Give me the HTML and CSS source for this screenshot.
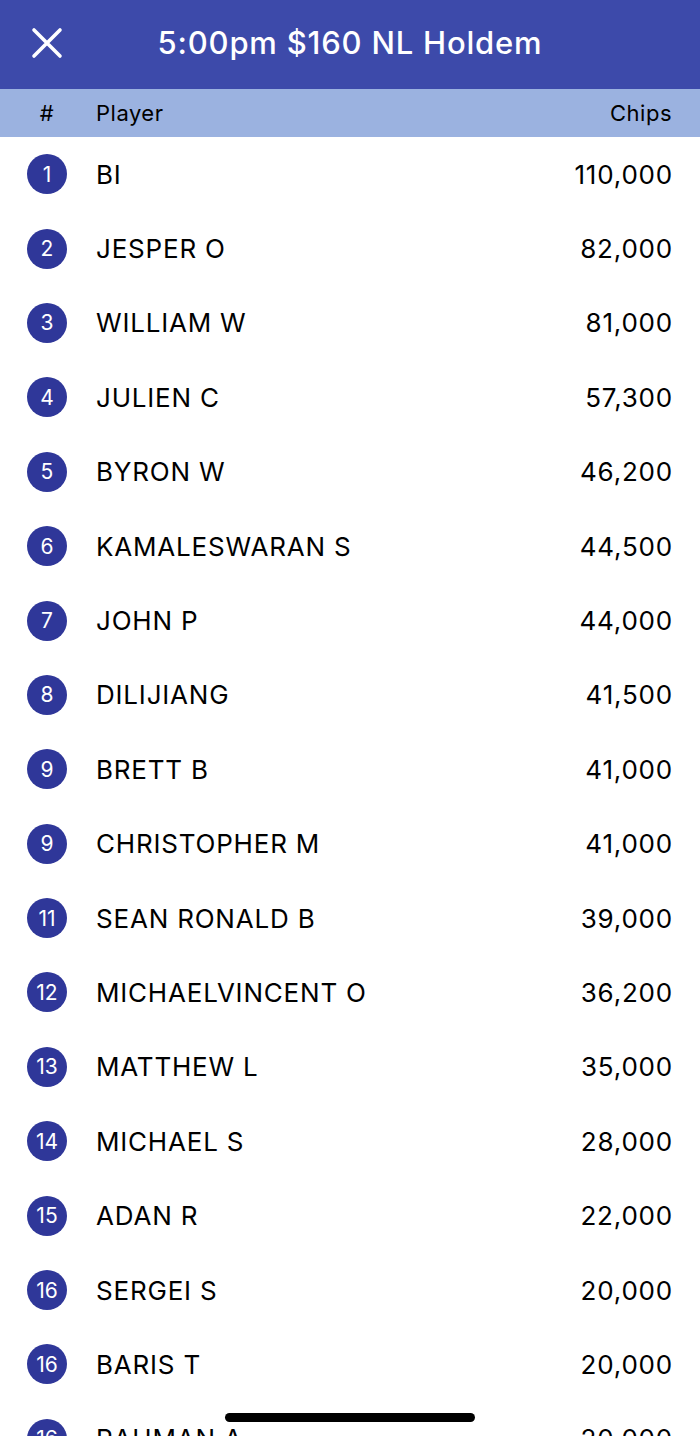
FILE: index.html
```html
<!DOCTYPE html>
<html>

<head>
    <title>5:00pm $160 NL Holdem</title>
    <link rel="stylesheet" href="styles.css">
</head>

<body>
    <div class="screen">
        <div class="topbar">
            <span class="close">
                <svg width="32" height="32" viewBox="0 0 32 32">
                    <path d="M3 3 L29 29 M29 3 L3 29" stroke="#fff" stroke-width="3.6" stroke-linecap="round" fill="none" />
                </svg>
            </span>
            <h1 class="title">5:00pm $160 NL Holdem</h1>
        </div>
        <div class="colhead">
            <span class="c-rank">#</span>
            <span class="c-name">Player</span>
            <span class="c-chips">Chips</span>
        </div>
        <ul class="list">
            <li class="row"><span class="rank">1</span><span class="name">BI</span><span class="chips">110,000</span></li>
            <li class="row"><span class="rank">2</span><span class="name">JESPER O</span><span class="chips">82,000</span></li>
            <li class="row"><span class="rank">3</span><span class="name">WILLIAM W</span><span class="chips">81,000</span></li>
            <li class="row"><span class="rank">4</span><span class="name">JULIEN C</span><span class="chips">57,300</span></li>
            <li class="row"><span class="rank">5</span><span class="name">BYRON W</span><span class="chips">46,200</span></li>
            <li class="row"><span class="rank">6</span><span class="name">KAMALESWARAN S</span><span class="chips">44,500</span></li>
            <li class="row"><span class="rank">7</span><span class="name">JOHN P</span><span class="chips">44,000</span></li>
            <li class="row"><span class="rank">8</span><span class="name">DILIJIANG</span><span class="chips">41,500</span></li>
            <li class="row"><span class="rank">9</span><span class="name">BRETT B</span><span class="chips">41,000</span></li>
            <li class="row"><span class="rank">9</span><span class="name">CHRISTOPHER M</span><span class="chips">41,000</span></li>
            <li class="row"><span class="rank">11</span><span class="name">SEAN RONALD B</span><span class="chips">39,000</span></li>
            <li class="row"><span class="rank">12</span><span class="name">MICHAELVINCENT O</span><span class="chips">36,200</span></li>
            <li class="row"><span class="rank">13</span><span class="name">MATTHEW L</span><span class="chips">35,000</span></li>
            <li class="row"><span class="rank">14</span><span class="name">MICHAEL S</span><span class="chips">28,000</span></li>
            <li class="row"><span class="rank">15</span><span class="name">ADAN R</span><span class="chips">22,000</span></li>
            <li class="row"><span class="rank">16</span><span class="name">SERGEI S</span><span class="chips">20,000</span></li>
            <li class="row"><span class="rank">16</span><span class="name">BARIS T</span><span class="chips">20,000</span></li>
            <li class="row"><span class="rank">16</span><span class="name">RAHMAN A</span><span class="chips">20,000</span></li>
        </ul>
        <div class="home-bar"></div>
    </div>
</body>

</html>
```

FILE: styles.css
```css
html,
body {
    margin: 0;
    padding: 0;
    background: #fff;
}

body {
    font-family: "Inter", "Liberation Sans", sans-serif;
    color: #000;
}

.screen {
    position: relative;
    width: 700px;
    height: 1436px;
    overflow: hidden;
}

.topbar {
    height: 89px;
    background: #3d4aaa;
    display: flex;
    align-items: center;
    position: relative;
}

.close {
    width: 32px;
    height: 32px;
    margin-left: 31px;
    margin-top: -4px;
    display: flex;
}

.title {
    position: absolute;
    left: 0;
    right: 0;
    top: 0;
    margin: 0;
    line-height: 86px;
    text-align: center;
    color: #fff;
    font-size: 31px;
    font-weight: 500;
    letter-spacing: 0.8px;
    pointer-events: none;
}

.colhead {
    height: 48px;
    background: #9bb2e0;
    display: flex;
    align-items: center;
    font-size: 22px;
    letter-spacing: 0.5px;
    padding-right: 28px;
}

.c-rank {
    flex: none;
    width: 40px;
    text-align: center;
    margin-left: 27px;
    margin-right: 29px;
}

.c-name {
    flex: 1;
}

.list {
    list-style: none;
    margin: 0;
    padding: 0;
}

.row {
    height: 74.4px;
    display: flex;
    align-items: center;
    padding-right: 28px;
    font-size: 26px;
    letter-spacing: 0.8px;
}

.rank {
    flex: none;
    width: 40px;
    height: 40px;
    border-radius: 50%;
    background: #2f3799;
    color: #fff;
    font-size: 21px;
    letter-spacing: 0;
    display: flex;
    align-items: center;
    justify-content: center;
    margin-left: 27px;
    margin-right: 29px;
}

.name {
    flex: 1;
}

.chips {
    text-align: right;
    margin-right: -1px;
}

.home-bar {
    position: absolute;
    left: 225px;
    bottom: 14px;
    width: 250px;
    height: 9px;
    border-radius: 5px;
    background: #000;
}
```
